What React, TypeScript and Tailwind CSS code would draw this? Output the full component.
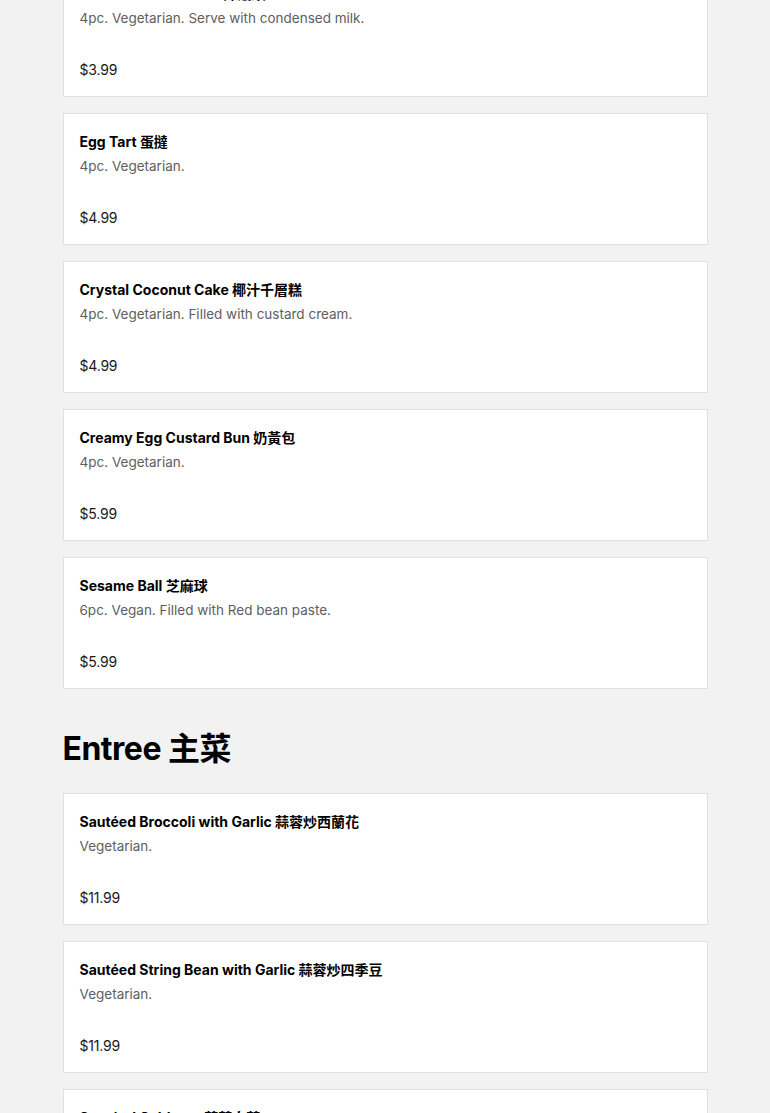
import React from "react";

type Item = { name: string; desc: string; price: string };

const desserts: Item[] = [
  { name: "Condensed Milk Bun 炸饅頭", desc: "4pc. Vegetarian. Serve with condensed milk.", price: "$3.99" },
  { name: "Egg Tart 蛋撻", desc: "4pc. Vegetarian.", price: "$4.99" },
  { name: "Crystal Coconut Cake 椰汁千層糕", desc: "4pc. Vegetarian. Filled with custard cream.", price: "$4.99" },
  { name: "Creamy Egg Custard Bun 奶黃包", desc: "4pc. Vegetarian.", price: "$5.99" },
  { name: "Sesame Ball 芝麻球", desc: "6pc. Vegan. Filled with Red bean paste.", price: "$5.99" },
];

const entrees: Item[] = [
  { name: "Sautéed Broccoli with Garlic 蒜蓉炒西蘭花", desc: "Vegetarian.", price: "$11.99" },
  { name: "Sautéed String Bean with Garlic 蒜蓉炒四季豆", desc: "Vegetarian.", price: "$11.99" },
  { name: "Sautéed Cabbage 蒜蓉白菜", desc: "Vegetarian.", price: "$11.99" },
];

function Card({ item }: { item: Item }) {
  return (
    <div className="bg-white border border-[#e0e0e0] px-4 pt-4 pb-4 flex flex-col">
      <div className="text-[14px] leading-6 font-bold text-black">{item.name}</div>
      <div className="text-[13.5px] leading-6 text-[#5e5e5e]">{item.desc}</div>
      <div className="text-[14px] leading-5 text-[#191919] tracking-[-0.2px] mt-[30px]">{item.price}</div>
    </div>
  );
}

export default function App() {
  return (
    <div
      className="min-h-screen bg-[#f2f2f2] overflow-hidden"
      style={{ fontFamily: "Inter, 'Noto Sans CJK TC', sans-serif" }}
    >
      <div className="w-[645px] mx-auto mt-[-35px] flex flex-col">
        <div className="flex flex-col gap-4">
          {desserts.map((it) => (
            <Card key={it.name} item={it} />
          ))}
        </div>
        <h2 className="mt-10 mb-6 text-[32px] leading-10 font-bold tracking-[-0.5px] text-black">Entree 主菜</h2>
        <div className="flex flex-col gap-4">
          {entrees.map((it) => (
            <Card key={it.name} item={it} />
          ))}
        </div>
      </div>
    </div>
  );
}
